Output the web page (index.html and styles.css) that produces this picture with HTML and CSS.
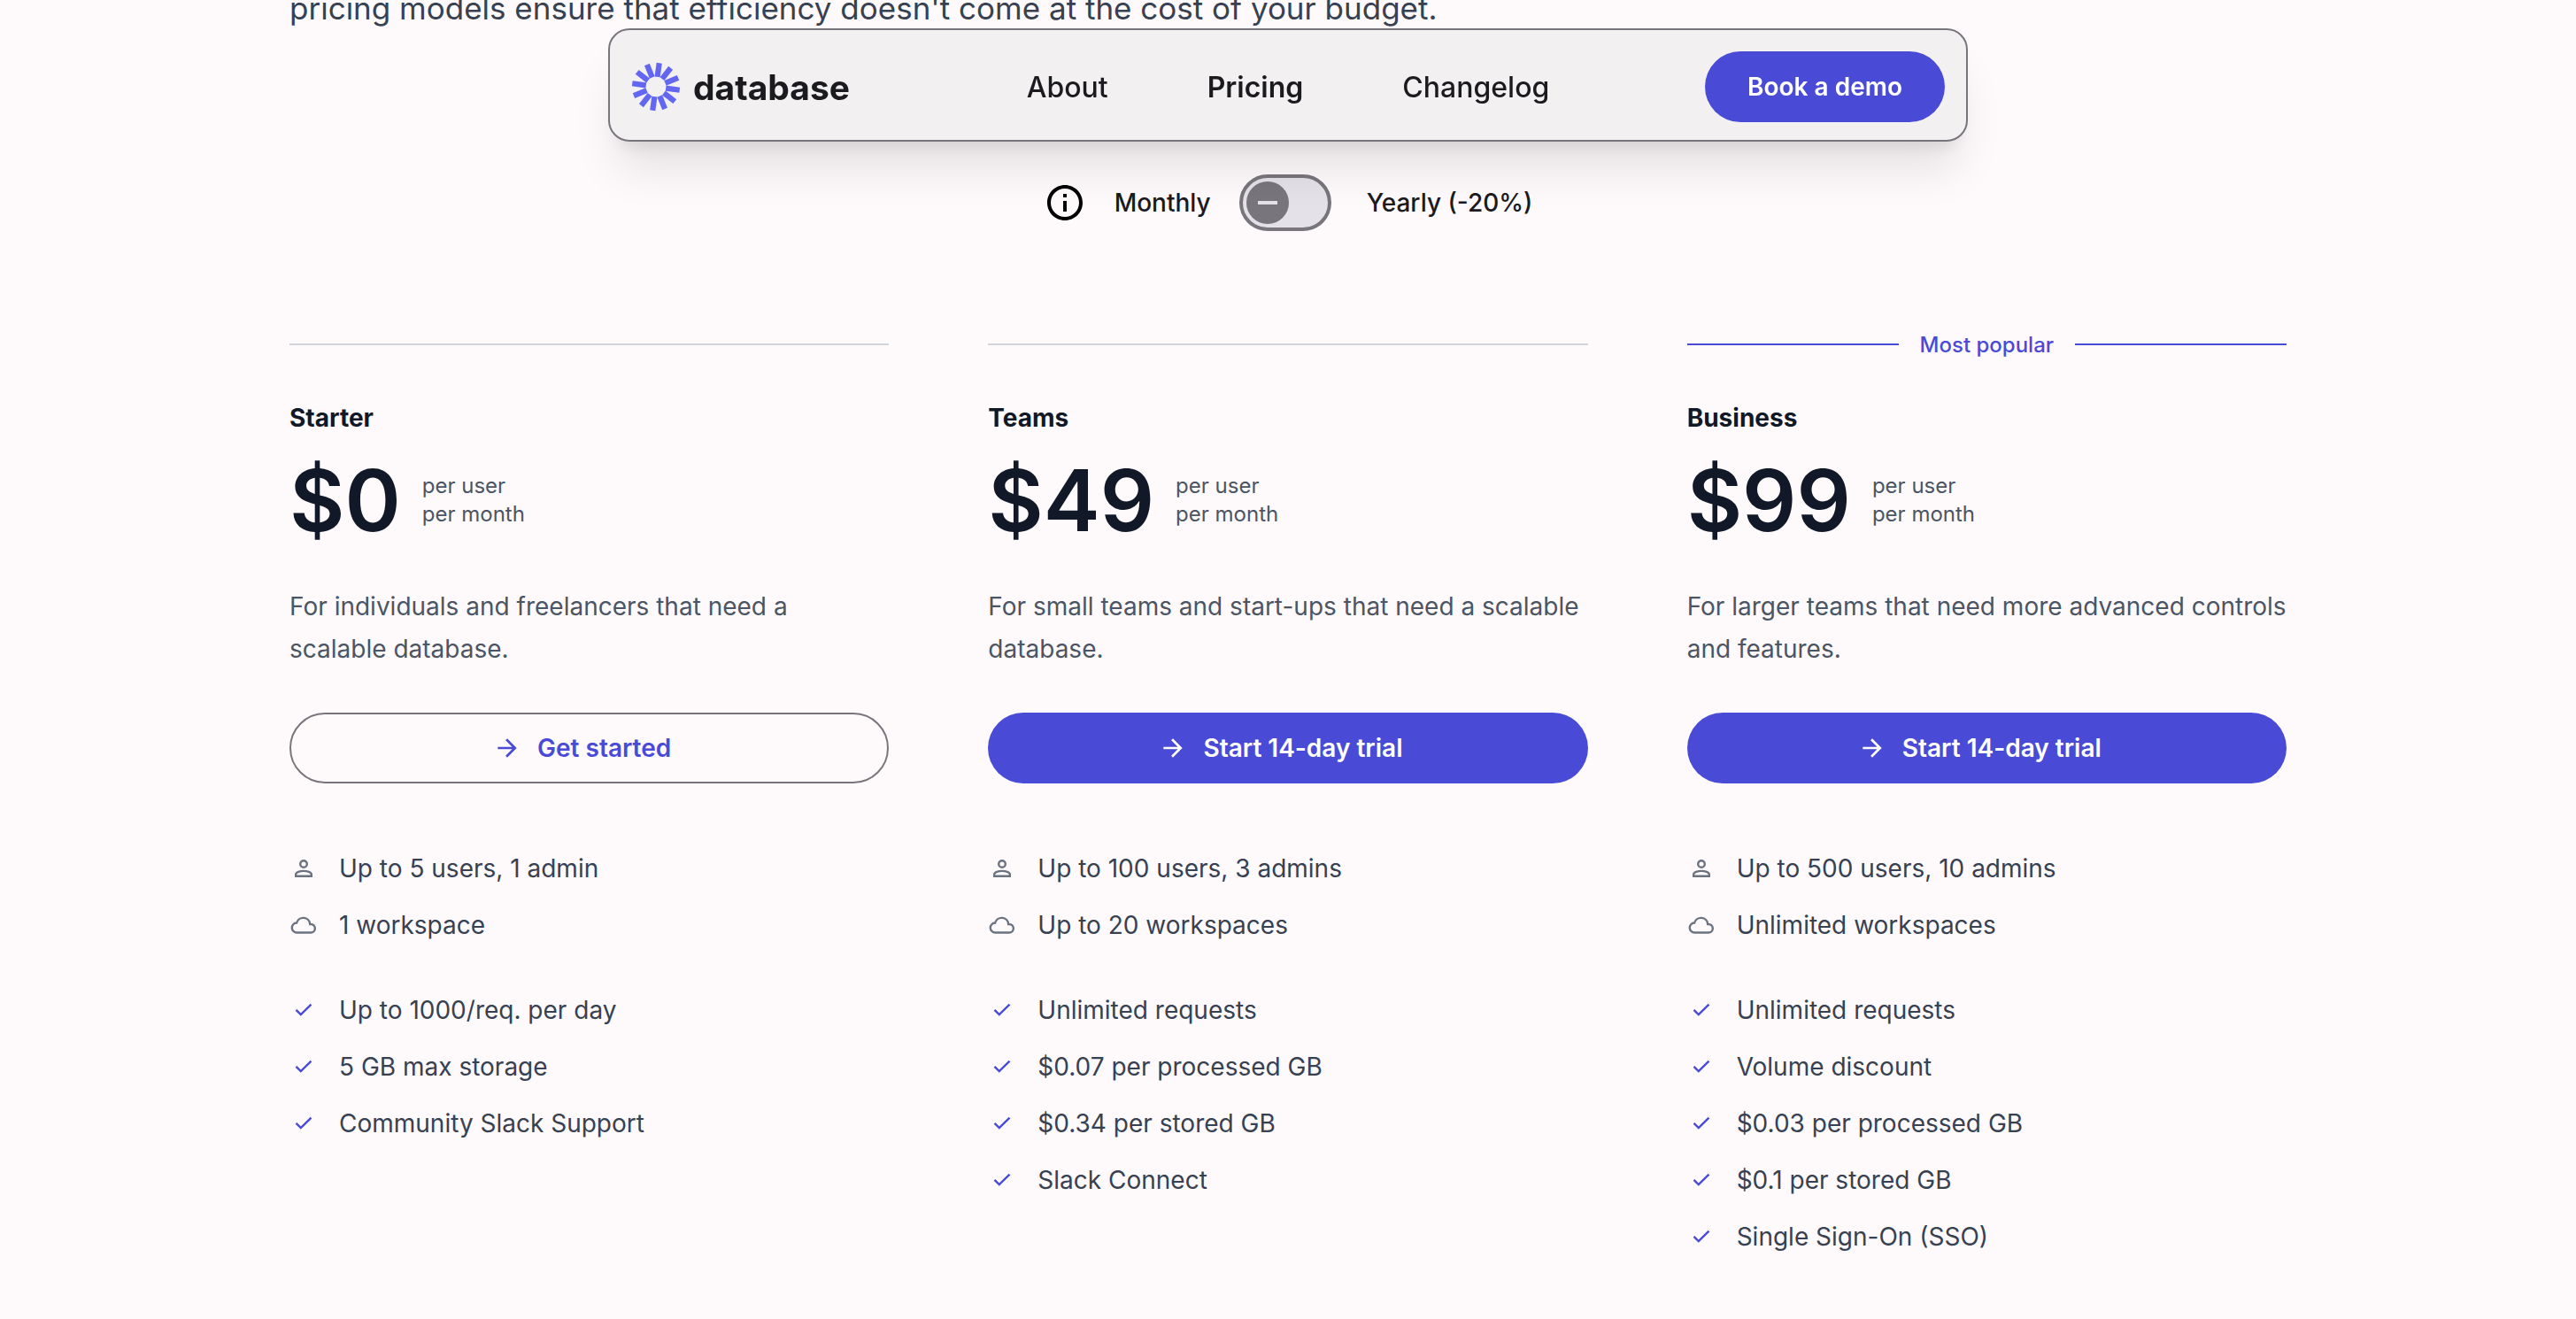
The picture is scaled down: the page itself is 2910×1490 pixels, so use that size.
FILE: index.html
```html
<!DOCTYPE html>
<html lang="en">
<head>
<meta charset="UTF-8">
<meta name="viewport" content="width=device-width, initial-scale=1.0">
<title>Pricing - database</title>
<link rel="stylesheet" href="styles.css">
</head>
<body>

<!-- Shared icons -->
<svg class="sprite" aria-hidden="true">
    <symbol id="icon-arrow" viewBox="0 0 24 24">
        <path d="M4 11v2h12.17l-5.59 5.59L12 20l8-8-8-8-1.41 1.41L16.17 11z"/>
    </symbol>
    <symbol id="icon-person" viewBox="0 0 32 32">
        <circle cx="16" cy="11" r="3.8" fill="none" stroke="currentColor" stroke-width="2.4"/>
        <path d="M7.2 24.8v-2.2c0-2.4 4.8-3.7 8.8-3.7s8.8 1.3 8.8 3.7v2.2z" fill="none" stroke="currentColor" stroke-width="2.4"/>
    </symbol>
    <symbol id="icon-cloud" viewBox="0 0 32 32">
        <path d="M8.4 24.5a5.5 5.5 0 0 1-.3-11A7.7 7.7 0 0 1 23.2 15h.9a4.7 4.7 0 0 1 0 9.5z" fill="none" stroke="currentColor" stroke-width="2.4"/>
    </symbol>
    <symbol id="icon-check" viewBox="0 0 32 32">
        <path d="M7.5 15.8l5.3 5.3L24.5 9.7" fill="none" stroke="currentColor" stroke-width="2.4"/>
    </symbol>
</svg>

<nav class="navbar">
    <a href="#" class="logo">
        <svg class="logo-mark" viewBox="-28 -28 56 56" aria-hidden="true">
            <g fill="#6366f1">
                <rect id="ray" x="-3.1" y="-27" width="6.2" height="15.7" transform="rotate(8)"/>
                <use href="#ray" transform="rotate(30)"/>
                <use href="#ray" transform="rotate(60)"/>
                <use href="#ray" transform="rotate(90)"/>
                <use href="#ray" transform="rotate(120)"/>
                <use href="#ray" transform="rotate(150)"/>
                <use href="#ray" transform="rotate(180)"/>
                <use href="#ray" transform="rotate(210)"/>
                <use href="#ray" transform="rotate(240)"/>
                <use href="#ray" transform="rotate(270)"/>
                <use href="#ray" transform="rotate(300)"/>
                <use href="#ray" transform="rotate(330)"/>
            </g>
        </svg>
        <span>database</span>
    </a>
    <div class="nav-links">
        <a href="#about">About</a>
        <a href="#pricing" class="active">Pricing</a>
        <a href="#changelog">Changelog</a>
    </div>
    <button type="button" class="btn btn-demo">Book a demo</button>
</nav>

<main class="container" id="pricing">
    <p class="intro">pricing models ensure that efficiency doesn't come at the cost of your budget.</p>

    <!-- Monthly / yearly switch -->
    <div class="billing">
        <svg class="info" viewBox="0 0 24 24" aria-hidden="true">
            <path d="M11 7h2v2h-2zm0 4h2v6h-2zm1-9C6.480 2 2 6.480 2 12s4.480 10 10 10 10-4.480 10-10S17.520 2 12 2zm0 18c-4.410 0-8-3.590-8-8s3.590-8 8-8 8 3.590 8 8-3.590 8-8 8z"/>
        </svg>
        <label for="period">Monthly</label>
        <input type="checkbox" role="switch" id="period" class="switch">
        <label for="period">Yearly (-20%)</label>
    </div>

    <div class="plans">
        <section class="plan">
            <div class="divider"></div>
            <h2>Starter</h2>
            <div class="price">
                <strong>$0</strong>
                <span>per user<br>per month</span>
            </div>
            <p class="description">For individuals and freelancers that need a scalable database.</p>
            <button type="button" class="btn btn-plan btn-outline">
                <svg class="icon" aria-hidden="true"><use href="#icon-arrow"/></svg>
                Get started
            </button>
            <ul class="limits">
                <li><svg class="icon" aria-hidden="true"><use href="#icon-person"/></svg>Up to 5 users, 1 admin</li>
                <li><svg class="icon" aria-hidden="true"><use href="#icon-cloud"/></svg>1 workspace</li>
            </ul>
            <ul class="features">
                <li><svg class="icon" aria-hidden="true"><use href="#icon-check"/></svg>Up to 1000/req. per day</li>
                <li><svg class="icon" aria-hidden="true"><use href="#icon-check"/></svg>5 GB max storage</li>
                <li><svg class="icon" aria-hidden="true"><use href="#icon-check"/></svg>Community Slack Support</li>
            </ul>
        </section>

        <section class="plan">
            <div class="divider"></div>
            <h2>Teams</h2>
            <div class="price">
                <strong>$49</strong>
                <span>per user<br>per month</span>
            </div>
            <p class="description">For small teams and start-ups that need a scalable database.</p>
            <button type="button" class="btn btn-plan">
                <svg class="icon" aria-hidden="true"><use href="#icon-arrow"/></svg>
                Start 14-day trial
            </button>
            <ul class="limits">
                <li><svg class="icon" aria-hidden="true"><use href="#icon-person"/></svg>Up to 100 users, 3 admins</li>
                <li><svg class="icon" aria-hidden="true"><use href="#icon-cloud"/></svg>Up to 20 workspaces</li>
            </ul>
            <ul class="features">
                <li><svg class="icon" aria-hidden="true"><use href="#icon-check"/></svg>Unlimited requests</li>
                <li><svg class="icon" aria-hidden="true"><use href="#icon-check"/></svg>$0.07 per processed GB</li>
                <li><svg class="icon" aria-hidden="true"><use href="#icon-check"/></svg>$0.34 per stored GB</li>
                <li><svg class="icon" aria-hidden="true"><use href="#icon-check"/></svg>Slack Connect</li>
            </ul>
        </section>

        <section class="plan">
            <div class="divider popular">Most popular</div>
            <h2>Business</h2>
            <div class="price">
                <strong>$99</strong>
                <span>per user<br>per month</span>
            </div>
            <p class="description">For larger teams that need more advanced controls and features.</p>
            <button type="button" class="btn btn-plan">
                <svg class="icon" aria-hidden="true"><use href="#icon-arrow"/></svg>
                Start 14-day trial
            </button>
            <ul class="limits">
                <li><svg class="icon" aria-hidden="true"><use href="#icon-person"/></svg>Up to 500 users, 10 admins</li>
                <li><svg class="icon" aria-hidden="true"><use href="#icon-cloud"/></svg>Unlimited workspaces</li>
            </ul>
            <ul class="features">
                <li><svg class="icon" aria-hidden="true"><use href="#icon-check"/></svg>Unlimited requests</li>
                <li><svg class="icon" aria-hidden="true"><use href="#icon-check"/></svg>Volume discount</li>
                <li><svg class="icon" aria-hidden="true"><use href="#icon-check"/></svg>$0.03 per processed GB</li>
                <li><svg class="icon" aria-hidden="true"><use href="#icon-check"/></svg>$0.1 per stored GB</li>
                <li><svg class="icon" aria-hidden="true"><use href="#icon-check"/></svg>Single Sign-On (SSO)</li>
            </ul>
        </section>
    </div>
</main>

</body>
</html>
```

FILE: styles.css
```css
* {
    box-sizing: border-box;
    margin: 0;
    padding: 0;
}
body {
    display: flow-root;
    font-family: Inter, sans-serif;
    font-size: 28px;
    background-color: #fefafc;
    color: #1b1b1f;
}
a {
    color: inherit;
    text-decoration: none;
}
ul {
    list-style: none;
}
.sprite {
    display: none;
}
.icon {
    flex: none;
    width: 32px;
    height: 32px;
    fill: currentColor;
}

/* Floating navigation bar */
.navbar {
    position: fixed;
    top: 32px;
    left: 0;
    right: 0;
    z-index: 10;
    display: grid;
    grid-template-columns: 1fr auto 1fr;
    align-items: center;
    max-width: 1536px;
    margin: 0 auto;
    padding: 24px 24px 20px;
    background-color: #f2f0f1;
    border: 2px solid #78757c;
    border-radius: 24px;
    box-shadow: 0 40px 50px -10px rgba(0,0,0,0.1), 0 16px 20px -12px rgba(0,0,0,0.1);
}
.logo {
    display: flex;
    align-items: center;
    gap: 14px;
    font-size: 39px;
    font-weight: 700;
}
.logo-mark {
    width: 56px;
    height: 56px;
}
.nav-links {
    display: flex;
    gap: 112px;
    font-size: 32px;
    font-weight: 500;
}
.nav-links .active {
    font-weight: 600;
}

.btn {
    height: 80px;
    border: none;
    border-radius: 40px;
    background-color: #494bd6;
    color: #fff;
    font-family: inherit;
    font-size: 28px;
    font-weight: 600;
    cursor: pointer;
}
.btn-demo {
    justify-self: end;
    padding: 0 48px;
}
.btn-plan {
    display: flex;
    align-items: center;
    justify-content: center;
    gap: 18px;
    width: 100%;
    padding: 0 48px 0 32px;
}
.btn-outline {
    border: 2px solid #78757c;
    background-color: transparent;
    color: #494bd6;
}

.container {
    max-width: 2256px;
    margin: 0 auto;
}
.intro {
    margin-top: -20px;
    font-size: 35px;
    line-height: 58px;
    color: #374151;
}

.billing {
    display: flex;
    align-items: center;
    justify-content: center;
    gap: 32px;
    height: 64px;
    margin-top: 159px;
    font-weight: 500;
}
.info {
    width: 48px;
    height: 48px;
}
.switch {
    appearance: none;
    display: flex;
    align-items: center;
    width: 104px;
    height: 64px;
    margin-right: 8px;
    padding: 4px;
    border: 4px solid #78757c;
    border-radius: 32px;
    background-color: #e4e1e9;
    cursor: pointer;
}
.switch::before {
    content: "";
    width: 48px;
    height: 48px;
    border-radius: 24px;
    background: linear-gradient(#e4e1e9, #e4e1e9) center / 22px 4px no-repeat #78757c;
}
.switch:checked {
    justify-content: flex-end;
}

.plans {
    display: grid;
    grid-template-columns: repeat(3, 1fr);
    gap: 112px;
    margin-top: 112px;
}
.divider {
    display: flex;
    align-items: center;
    gap: 24px;
    height: 32px;
    font-size: 24px;
    font-weight: 500;
    color: #d1d5db;
}
.divider::before {
    content: "";
    flex: 1;
    height: 2px;
    background-color: currentColor;
}
.popular {
    color: #494bd6;
}
.popular::after {
    content: "";
    flex: 1;
    height: 2px;
    background-color: currentColor;
}
.plan h2 {
    margin-top: 48px;
    font-size: 28px;
    font-weight: 700;
    line-height: 38px;
    color: #111827;
}
.price {
    display: flex;
    align-items: center;
    gap: 24px;
    margin-top: 26px;
    height: 96px;
}
.price strong {
    font-size: 96px;
    font-weight: 600;
    line-height: 96px;
    color: #111827;
}
.price span {
    font-size: 24px;
    line-height: 32px;
    color: #4b5563;
}
.description {
    margin: 48px 0;
    line-height: 48px;
    color: #4b5563;
}
.limits, .features {
    display: grid;
    gap: 24px;
    margin-top: 76px;
    line-height: 40px;
    color: #374151;
}
.features {
    margin-top: 56px;
}
.limits li, .features li {
    display: flex;
    align-items: center;
    gap: 24px;
}
.limits .icon {
    color: #6b7280;
}
.features .icon {
    color: #494bd6;
}
```
